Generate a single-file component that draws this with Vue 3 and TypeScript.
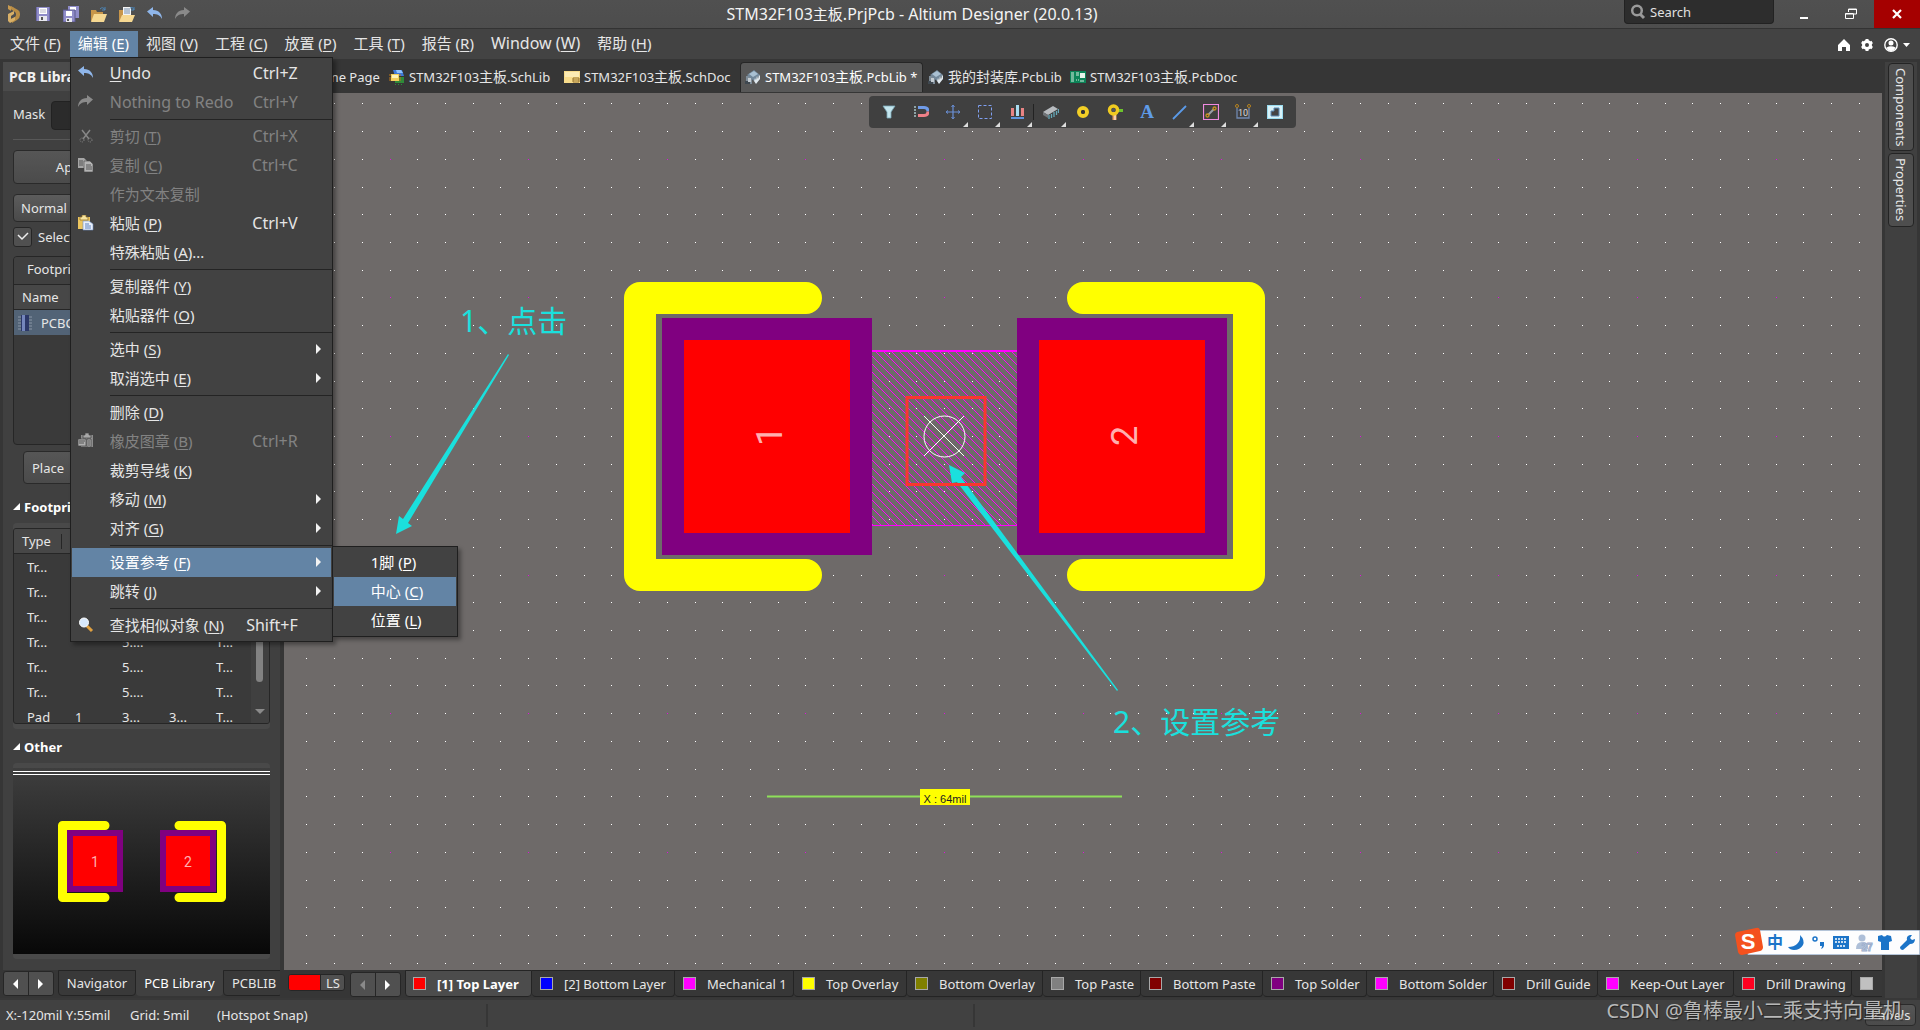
<script setup lang="ts">
interface Run { text: string; cjk: boolean }
interface MenuEntry {
  label?: string
  key?: string
  tail?: string
  shortcut?: string
  icon?: string
  disabled?: boolean
  arrow?: boolean
  active?: boolean
  children?: MenuEntry[]
  separator?: boolean
}

/** Splits a label into Latin and Chinese runs, which are set at slightly different sizes. */
function runs(text: string): Run[] {
  return (text.match(/[\u3000-\u9fff]+|[^\u3000-\u9fff]+/g) ?? []).map(part => ({
    text: part,
    cjk: /[\u3000-\u9fff]/.test(part),
  }))
}

const menus = [
  { label: '文件', key: 'F' },
  { label: '编辑', key: 'E', open: true },
  { label: '视图', key: 'V' },
  { label: '工程', key: 'C' },
  { label: '放置', key: 'P' },
  { label: '工具', key: 'T' },
  { label: '报告', key: 'R' },
  { label: 'Window', key: 'W' },
  { label: '帮助', key: 'H' },
]

const editMenu: MenuEntry[] = [
  { label: 'Undo', shortcut: 'Ctrl+Z', icon: 'undo' },
  { label: 'Nothing to Redo', shortcut: 'Ctrl+Y', icon: 'redo', disabled: true },
  { separator: true },
  { label: '剪切', key: 'T', shortcut: 'Ctrl+X', icon: 'cut', disabled: true },
  { label: '复制', key: 'C', shortcut: 'Ctrl+C', icon: 'copy', disabled: true },
  { label: '作为文本复制', disabled: true },
  { label: '粘贴', key: 'P', shortcut: 'Ctrl+V', icon: 'paste' },
  { label: '特殊粘贴', key: 'A', tail: '...' },
  { separator: true },
  { label: '复制器件', key: 'Y' },
  { label: '粘贴器件', key: 'O' },
  { separator: true },
  { label: '选中', key: 'S', arrow: true },
  { label: '取消选中', key: 'E', arrow: true },
  { separator: true },
  { label: '删除', key: 'D' },
  { label: '橡皮图章', key: 'B', shortcut: 'Ctrl+R', icon: 'stamp', disabled: true },
  { label: '裁剪导线', key: 'K' },
  { label: '移动', key: 'M', arrow: true },
  { label: '对齐', key: 'G', arrow: true },
  { separator: true },
  {
    label: '设置参考', key: 'F', arrow: true, active: true,
    children: [
      { label: '1脚', key: 'P' },
      { label: '中心', key: 'C', active: true },
      { label: '位置', key: 'L' },
    ],
  },
  { label: '跳转', key: 'J', arrow: true },
  { separator: true },
  { label: '查找相似对象', key: 'N', shortcut: 'Shift+F', icon: 'find' },
]

const docTabs = [
  { label: 'Home Page', icon: 'home', width: 100 },
  { label: 'STM32F103主板.SchLib', icon: 'schlib', width: 175 },
  { label: 'STM32F103主板.SchDoc', icon: 'schdoc', width: 181 },
  { label: 'STM32F103主板.PcbLib *', icon: 'pcblib', width: 183, active: true },
  { label: '我的封装库.PcbLib', icon: 'pcblib', width: 142 },
  { label: 'STM32F103主板.PcbDoc', icon: 'pcbdoc', width: 180 },
]

const layers = [
  { label: '[1] Top Layer', color: '#ff0000', width: 127, active: true },
  { label: '[2] Bottom Layer', color: '#0000ff', width: 143 },
  { label: 'Mechanical 1', color: '#ff00ff', width: 119 },
  { label: 'Top Overlay', color: '#ffff00', width: 113 },
  { label: 'Bottom Overlay', color: '#808000', width: 136 },
  { label: 'Top Paste', color: '#808080', width: 98 },
  { label: 'Bottom Paste', color: '#800000', width: 122 },
  { label: 'Top Solder', color: '#800080', width: 104 },
  { label: 'Bottom Solder', color: '#ff00ff', width: 127 },
  { label: 'Drill Guide', color: '#800000', width: 104 },
  { label: 'Keep-Out Layer', color: '#ff00ff', width: 136 },
  { label: 'Drill Drawing', color: '#ff0020', width: 118 },
  { label: '', color: '#c0c0c0', width: 60 },
]

const primitives = [
  ['Tr...', '', '5....', '', 'T...'],
  ['Tr...', '', '5....', '', 'T...'],
  ['Tr...', '', '5....', '', 'T...'],
  ['Tr...', '', '5....', '', 'T...'],
  ['Tr...', '', '5....', '', 'T...'],
  ['Tr...', '', '5....', '', 'T...'],
  ['Pad', '1', '3...', '3...', 'T...'],
]

const tools = [
  { name: 'Filter', icon: 'filter' },
  { name: 'Snap', icon: 'magnet' },
  { name: 'Move', icon: 'cross', more: true },
  { name: 'Select', icon: 'marquee', more: true },
  { name: 'Align', icon: 'align', more: true, last: true },
  { name: 'Component', icon: 'chip', more: true },
  { name: 'Pad', icon: 'pad' },
  { name: 'Via', icon: 'via' },
  { name: 'String', icon: 'string' },
  { name: 'Line', icon: 'line', more: true },
  { name: 'Keepout', icon: 'keepout', more: true },
  { name: 'Dimension', icon: 'dimension', more: true },
  { name: 'Region', icon: 'region' },
]

const icons: Record<string, string> = {
  save: '<path d="M1 1h14v14H1z" fill="#8f8cc8"/><path d="M1 1h1v14H1zM14 1h1v14h-1z" fill="#6d6aa8"/><path d="M4 2h8v6H4z" fill="#fff"/><path d="M5 4h6M5 6h6" stroke="#b8b8c8"/><path d="M4 10h8v5H4z" fill="#e8e8f0"/><path d="M6 11h2v3H6z" fill="#555"/>',
  saveall: '<path d="M5 0h11v12H5z" fill="#8f8cc8"/><path d="M7 1h6v3H7z" fill="#fff"/><path d="M0 4h12v12H0z" fill="#8f8cc8" stroke="#5b588e" stroke-width="1"/><path d="M3 5h6v5H3z" fill="#fff"/><path d="M3 12h6v4H3z" fill="#e8e8f0"/><path d="M4 13h2v2H4z" fill="#555"/>',
  open: '<path d="M0 4h5l1 2h6v9H0z" fill="#c8964a"/><path d="M3 8h13l-3 8H0z" fill="#f6d892"/><path d="M9 3q3-3 5 1M14 1v3h-3" fill="none" stroke="#4d86b8" stroke-width="1"/>',
  openproj: '<path d="M0 4h4v11H0z" fill="#c8964a"/><path d="M4 1h8v10H4z" fill="#f4f4f4"/><path d="M5 3h6M5 5h6M5 7h6" stroke="#7790b0"/><path d="M3 9h13l-3 7H0z" fill="#f6d892"/><path d="M11 2q3-2 4 2M15 1v3h-3" fill="none" stroke="#4d86b8"/>',
  undo: '<path d="M0 5.500L6 1v3c6 0 9 4 9 9-2-4-5-5-9-5v3z" fill="#8fb6ea"/>',
  redo: '<path d="M15 5.500L9 1v3C3 4 0 8 0 13c2-4 5-5 9-5v3z" fill="#8a8a8a"/>',
  cut: '<path d="M4 2l7 9M12 2L5 11" stroke="#868686" stroke-width="1.500"/><circle cx="4" cy="12" r="2" fill="none" stroke="#868686" stroke-dasharray="1 1"/><circle cx="12" cy="12" r="2" fill="none" stroke="#868686" stroke-dasharray="1 1"/>',
  copy: '<path d="M0 1h6l3 3v7H0z" fill="#a6a6a6"/><path d="M6 4h6l3 3v8H6z" fill="#b4b4b4" stroke="#444" stroke-width=".6"/><path d="M1 4h4M1 6h4M1 8h4M8 8h5M8 10h6M8 12h6" stroke="#555"/>',
  paste: '<path d="M0 2h12v12H0z" fill="#ecc55e"/><path d="M4 0h4v2h2v3H2V2h2z" fill="#f6e4a0" stroke="#8c6a20" stroke-width=".7"/><path d="M5 6h6l4 3v6H5z" fill="#e8effa" stroke="#6f8fc0" stroke-width=".6"/><path d="M7 9h4M7 11h6M7 13h6" stroke="#5c82c0"/>',
  stamp: '<path d="M3 2h12v12H3z" fill="#8d8d8d"/><path d="M7 0h4v2h2v3H5V2h2z" fill="#a8a8a8" stroke="#444" stroke-width=".7"/><path d="M0 6h8v7H0zM9 6h4v8H9z" fill="#b0b0b0" stroke="#444" stroke-width=".7"/><path d="M1 8h6M1 10h5M10 8h2M10 10h2M10 12h2" stroke="#555"/>',
  find: '<path d="M9 9l5 5" stroke="#e0a040" stroke-width="3"/><circle cx="6" cy="5.500" r="4.500" fill="#d8e8fa" stroke="#fff" stroke-width="1"/>',
  home: '<path d="M8 2l7 7h-2v5H3V9H1z" fill="#ddd"/>',
  schlib: '<path d="M4 1h9l2 6H6z" fill="#3e79d8"/><path d="M7 1h5l2 3H8z" fill="#8ec2ff"/><path d="M6 8h9v6H6z" fill="#2f8a3a"/><path d="M6 15h1v1H6zM9 15h1v1H9zM12 15h1v1h-1z" fill="#2f8a3a"/><path d="M2 5h8v7H2z" fill="#f2cf5c"/><path d="M3 6h6v3H3z" fill="#fdf3b8"/><path d="M0 6h2M0 9h2M0 11h2M10 6h2M10 9h2M10 11h2" stroke="#c07818"/>',
  schdoc: '<path d="M0 2h16v12H0z" fill="#f8dc8c"/><path d="M1 3h14v5H1z" fill="#fcebb4"/><path d="M9 9h6v4H9zM9 11h6" fill="none" stroke="#96722c"/>',
  pcblib: '<path d="M1 7h6v8H1z" fill="#7e8c98"/><path d="M0 12h5v3H0z" fill="#3f4850"/><path d="M2 6L9 1l6 5-6 6z" fill="#71879a"/><path d="M4 5l5-3 4 3-5 3z" fill="#a9c0d2"/><path d="M9 12l1-3 1 2 1-4 1 3 1-4 1 1v3l-4 5z" fill="#dfe8ee"/><path d="M3 9h3v4H3z" fill="#c4ccd2"/>',
  pcbdoc: '<path d="M0 2h16v12H0z" fill="#0c8458"/><path d="M1 4h3M1 6h3M1 8h3M1 10h3M1 12h3M6 4h3M6 6h3M6 11h1M8 11h1M10 12h4" stroke="#d8efe0"/><path d="M10 4h5v5h-5z" fill="#e6f4ea"/>',
  filter: '<path d="M2 2h12l-4 6v6H6V8z" fill="#c4e6ee" stroke="#7ba8b8" stroke-width=".8"/>',
  magnet: '<path d="M5 3.500h6q4 0 4 4" fill="none" stroke="#6f9be8" stroke-width="3"/><path d="M15 7.500q0 4-4 4H5" fill="none" stroke="#ee8088" stroke-width="3"/><path d="M1 3h2M1 6h2M1 9h2M1 12h2" stroke="#a8c4c8" stroke-width="1.500"/>',
  cross: '<path d="M8 2v12M2 8h12" stroke="#6a90d8" stroke-width="1.200"/><path d="M6.500 3L8 1l1.500 2M6.500 13L8 15l1.500-2M3 6.500L1 8l2 1.500M13 6.500L15 8l-2 1.500" fill="none" stroke="#6a90d8"/>',
  marquee: '<path d="M1.500 1.500h13v13h-13z" fill="none" stroke="#7f9ff0" stroke-dasharray="3 2"/>',
  align: '<path d="M2 4h3v8H2zM12 4h3v8h-3z" fill="#e88484"/><path d="M7 1h3v11H7z" fill="#a8dcf0"/><path d="M2 13h13v2H2z" fill="#5f94dc"/>',
  chip: '<path d="M0 8L10 2l5 3-10 6z" fill="#b8bcc0"/><path d="M0 8l5 3v3l-5-3z" fill="#707478"/><path d="M6 11v4M8.500 10v4M11 8v5M13.500 7v4M15.500 5v4" stroke="#66a8b8" stroke-width="1.300"/>',
  pad: '<circle cx="8" cy="8" r="4" fill="none" stroke="#f3cf26" stroke-width="4"/><circle cx="8" cy="8" r="2" fill="#333"/>',
  via: '<path d="M5.500 8h4v8h-4z" fill="#e8a060"/><path d="M7.500 8h1v8h-1z" fill="#fff"/><path d="M9 5h7v3H9z" fill="#6cc42c"/><circle cx="6.500" cy="6" r="4" fill="none" stroke="#f0cb20" stroke-width="3.500"/><circle cx="6.500" cy="6" r="2" fill="#555"/>',
  string: '<text x="8" y="14" font-family="Liberation Serif, serif" font-size="19" font-weight="700" text-anchor="middle" fill="#5f9ce8">A</text>',
  line: '<path d="M2 15L15 2" stroke="#5a9ae8" stroke-width="1.800"/>',
  keepout: '<path d="M.5 .5h15v15H.5z" fill="none" stroke="#f08ae0" stroke-width="1.200"/><path d="M5 11l6-6" stroke="#9a9ea8" stroke-width="2"/><circle cx="4.500" cy="11.500" r="1.500" fill="none" stroke="#c89020" stroke-width="1.300"/><circle cx="11.500" cy="4.500" r="1.500" fill="none" stroke="#c89020" stroke-width="1.300"/>',
  dimension: '<path d="M2 4v10h12V4" fill="none" stroke="#7088b0" stroke-width="1.300"/><circle cx="2" cy="2" r="1.500" fill="none" stroke="#b88420"/><circle cx="14" cy="2" r="1.500" fill="none" stroke="#b88420"/><text x="8" y="12" font-family="Roboto, sans-serif" font-size="9" text-anchor="middle" fill="#ddd">10</text>',
  region: '<path d="M0 1h16v14H0z" fill="#9adcf0"/><path d="M1 2h14v12H1z" fill="#d8f2f8"/><path d="M7 4h5v8H4V7h3z" fill="#444" stroke="#5c8cb8"/>',
}

/* Snap grid: 5 mil pitch around the footprint origin, every fifth point in both axes is magenta. */
const pitch = 27.72
const white: string[] = []
const magenta: string[] = []
for (let i = -24; i <= 40; i++) {
  for (let j = -12; j <= 30; j++) {
    const point = `M${Math.round(i * pitch)} ${Math.round(j * pitch)}h1`
    if (i % 5 === 0 && j % 5 === 0 && (i || j)) magenta.push(point)
    else white.push(point)
  }
}
const gridDots = white.join('')
const majorDots = magenta.join('')
</script>

<template>
  <div class="app">
    <header class="titlebar">
      <div class="quick">
        <svg class="logo" viewBox="0 0 14 20" width="14" height="20">
          <path d="M1 1l6 3v3L4 5v2L1 5z" fill="#c79a50" />
          <path d="M4 2l7 4q2 1 2 4v1q0 3-3 5l-5 3-1-4 4-2q1-1 1-2v-1q0-1-1-2L4 5z" fill="#b98d45" />
          <path d="M1 10l6-3v3l-3 2v3l4-2v3l-5 3-2-2z" fill="#d8b068" />
        </svg>
        <button v-for="n in ['save', 'saveall', 'open', 'openproj', 'undo', 'redo']" :key="n" class="quick-btn" :aria-label="n">
          <svg viewBox="0 0 16 16" width="16" height="16" v-html="icons[n]" />
        </button>
      </div>
      <h1 class="title"><span v-for="(r, i) in runs('STM32F103主板.PrjPcb - Altium Designer (20.0.13)')" :key="i" :class="{ cjk: r.cjk }">{{ r.text }}</span></h1>
      <div class="window-tools">
        <label class="search">
          <svg viewBox="0 0 16 16" width="16" height="16"><circle cx="7" cy="6.500" r="4.800" fill="none" stroke="#9a9a9a" stroke-width="2.500" /><path d="M10 10l4 4" stroke="#9a9a9a" stroke-width="3" /></svg>
          <input type="text" placeholder="Search" aria-label="Search">
        </label>
        <button class="win" aria-label="Minimize"><svg viewBox="0 0 12 12" width="12" height="12"><path d="M2 9h8v2H2z" fill="#fff" /></svg></button>
        <button class="win" aria-label="Restore"><svg viewBox="0 0 12 12" width="12" height="12"><path d="M3.500 4V1h8v5H9M3.500 1.500h8" fill="none" stroke="#fff" /><path d="M.5 5.500h8v5h-8zM.5 6h8" fill="none" stroke="#fff" /></svg></button>
        <button class="win close" aria-label="Close"><svg viewBox="0 0 12 12" width="12" height="12"><path d="M2 2l8 8M10 2l-8 8" stroke="#fff" stroke-width="2.200" /></svg></button>
      </div>
    </header>

    <nav class="menubar">
      <div v-for="m in menus" :key="m.key" class="menu">
        <button class="menu-btn" :class="{ open: m.open, latin: m.label === 'Window' }">{{ m.label }} <span>(<u>{{ m.key }}</u>)</span></button>
        <ul v-if="m.open" class="dropdown">
          <template v-for="(e, i) in editMenu" :key="i">
            <li v-if="e.separator" class="rule" />
            <li v-else class="entry" :class="{ active: e.active, disabled: e.disabled }">
              <button class="entry-btn" :disabled="e.disabled">
                <span class="entry-icon"><svg v-if="e.icon" viewBox="0 0 16 16" width="16" height="16" v-html="icons[e.icon]" /></span>
                <span v-if="e.label === 'Undo'" class="latin"><u>U</u>ndo</span>
                <span v-else :class="{ latin: e.label === 'Nothing to Redo' }">{{ e.label }}<template v-if="e.key"> (<u>{{ e.key }}</u>)</template>{{ e.tail }}</span>
                <span v-if="e.shortcut" class="shortcut">{{ e.shortcut }}</span>
                <span v-if="e.arrow" class="more" />
              </button>
              <ul v-if="e.children" class="dropdown sub">
                <li v-for="c in e.children" :key="c.key" class="entry" :class="{ active: c.active }">
                  <button class="entry-btn sub-btn">{{ c.label }} (<u>{{ c.key }}</u>)</button>
                </li>
              </ul>
            </li>
          </template>
        </ul>
      </div>
      <div class="account">
        <button aria-label="Home"><svg viewBox="0 0 14 14" width="14" height="14"><path d="M7 1l6 6v6H9V9H5v4H1V7z" fill="#fff" /></svg></button>
        <button aria-label="Settings"><svg viewBox="0 0 14 14" width="14" height="14"><circle cx="7" cy="7" r="3.500" fill="none" stroke="#fff" stroke-width="3" /><path d="M7 1v2.500M7 10.500V13M1.800 4l2 1.200M10.200 8.800l2 1.200M1.800 10l2-1.200M10.200 5.200l2-1.200" stroke="#fff" stroke-width="3" /></svg></button>
        <button class="user" aria-label="Account"><svg viewBox="0 0 26 14" width="26" height="14"><circle cx="7" cy="7" r="6.200" fill="#434343" stroke="#fff" stroke-width="1.400" /><circle cx="7" cy="5" r="2.500" fill="#fff" /><path d="M2.500 9.500q4.500-2.500 9 0Q10 13 7 13T2.500 9.500z" fill="#fff" /><path d="M19 5h7l-3.500 4z" fill="#fff" /></svg></button>
      </div>
    </nav>

    <main class="workspace">
      <aside class="left">
        <section class="panel">
          <h2 class="panel-title">PCB Library</h2>
          <div class="panel-body">
            <label class="mask">Mask <input type="text"></label>
            <hr class="divider">
            <div class="buttons"><button class="btn apply">Apply</button></div>
            <select class="mode" aria-label="Highlight mode"><option>Normal</option></select>
            <label class="check"><input type="checkbox" checked><svg viewBox="0 0 12 12" width="12" height="12"><path d="M1 5l4 4 6-6" fill="none" stroke="#eee" stroke-width="1.500" /></svg>Select</label>
            <div class="list">
              <h3 class="list-title">Footprints</h3>
              <table class="grid">
                <thead><tr><th class="first">Name</th></tr></thead>
                <tbody>
                  <tr class="selected">
                    <td>
                      <span class="component">
                        <svg viewBox="0 0 14 16" width="14" height="16"><path d="M3 0h8v16H3z" fill="#2c3868" /><path d="M4 0h3v16H4z" fill="#7486bc" /><path d="M0 2h3M0 5h3M0 8h3M0 11h3M0 14h3M11 2h3M11 5h3M11 8h3M11 11h3M11 14h3" stroke="#8a97a6" /></svg>PCBCOMPONENT
                      </span>
                    </td>
                  </tr>
                </tbody>
              </table>
            </div>
            <div class="buttons place-row"><button class="btn place">Place</button></div>
            <h3 class="section">Footprint</h3>
            <div class="tray primitives">
              <div class="scroller">
                <table class="grid rows">
                  <thead><tr><th class="type">Type</th><th /><th /><th /><th /></tr></thead>
                  <tbody>
                    <tr v-for="(row, i) in primitives" :key="i"><td v-for="(cell, j) in row" :key="j">{{ cell }}</td></tr>
                  </tbody>
                </table>
                <div class="scrollbar"><span class="thumb" /><span class="down" /></div>
              </div>
            </div>
            <h3 class="section other">Other</h3>
            <div class="tray preview">
              <svg class="thumbnail" viewBox="0 0 257 186" preserveAspectRatio="xMidYMid meet">
                <g fill="none" stroke="#ffff00" stroke-width="9" stroke-linecap="round" stroke-linejoin="round">
                  <path d="M92 57.500H49.500V129.500H92" /><path d="M166 57.500H208.500V129.500H166" />
                </g>
                <path d="M54 62h56v62H54zM147 62h56v62h-56z" fill="#800080" />
                <path d="M60 68h44v50H60zM153 68h44v50h-44z" fill="#ff0000" />
                <text x="82" y="99" class="pin small">1</text><text x="175" y="99" class="pin small">2</text>
              </svg>
            </div>
          </div>
        </section>
        <div class="panel-tabs">
          <div class="pager"><button aria-label="Previous"><i class="prev" /></button><button aria-label="Next"><i class="next" /></button></div>
          <button class="ptab nav">Navigator</button>
          <button class="ptab lib on">PCB Library</button>
          <button class="ptab last-tab">PCBLIB</button>
        </div>
      </aside>

      <section class="center">
        <div class="doc-tabs">
          <button v-for="t in docTabs" :key="t.label" class="doc" :class="{ on: t.active }" :style="{ width: t.width + 'px' }">
            <svg viewBox="0 0 16 16" width="16" height="16" v-html="icons[t.icon]" />
            <span><span v-for="(r, i) in runs(t.label)" :key="i" :class="{ cjk: r.cjk }">{{ r.text }}</span></span>
          </button>
        </div>

        <div class="canvas">
          <svg class="drawing" width="100%" height="100%">
            <defs>
              <pattern id="hatch" width="8" height="8" patternUnits="userSpaceOnUse">
                <path d="M-1 -1l10 10M7 -1l2 2M-1 7l2 2" stroke="#ff00ff" stroke-width="1" />
              </pattern>
            </defs>
            <g transform="translate(660 343)">
              <path d="M-72 -86H73V90H-72z" fill="url(#hatch)" />
              <path d="M-72 -85H73" stroke="#ff00ff" stroke-width="2" /><path d="M-72 89.500H73" stroke="#ff00ff" />
              <g transform="translate(0 .5)" shape-rendering="crispEdges">
                <path :d="gridDots" stroke="#fff" /><path :d="majorDots" stroke="#e010e0" />
              </g>
              <g fill="none" stroke="#ffff00" stroke-width="32" stroke-linecap="round" stroke-linejoin="round">
                <path d="M-138 -138H-304V139H-138" /><path d="M139 -138H305V139H139" />
              </g>
              <path d="M-282 -118h210v237h-210zM73 -118h210v237H73z" fill="#800080" />
              <path d="M-260 -96h166v193h-166zM95 -96h166v193H95z" fill="#ff0000" />
              <text class="pin" transform="translate(-162 0) rotate(-90)">1</text>
              <text class="pin" transform="translate(193 0) rotate(-90)">2</text>
              <g fill="none" stroke="#fff"><circle cx=".5" cy=".5" r="20.500" /><path d="M-20 -20L20 20M20 -20L-20 20" /></g>
              <path d="M-177 360.500H178" stroke="#8ee05a" stroke-width="2" />
              <path d="M-24 353h50v16h-50z" fill="#ffff00" />
              <text class="measure" x="1" y="367">X : 64mil</text>
              <g fill="#1ae0dd">
                <path d="M-548 98L-545 80L-541 83L-436 -82L-435 -81L-536 87L-532 90z" />
                <path d="M5 29L21 37L17 41L174 254L173 255L13 46L8 47z" />
                <text class="note" x="-484" y="-104">1、点击</text>
                <text class="note" x="169" y="297">2、设置参考</text>
              </g>
              <path d="M-37 -38.500H41V48.500H-37z" fill="none" stroke="#f8372f" stroke-width="3" />
            </g>
          </svg>
          <div class="toolbar">
            <button v-for="t in tools" :key="t.name" class="tool" :class="{ more: t.more, last: t.last }" :aria-label="t.name">
              <svg viewBox="0 0 16 16" width="16" height="16" v-html="icons[t.icon]" />
            </button>
          </div>
        </div>

        <div class="layers">
          <button class="layer-set"><span class="chip" /><span class="ls">LS</span></button>
          <div class="pager"><button aria-label="Previous layer" disabled><i class="prev" /></button><button aria-label="Next layer"><i class="next" /></button></div>
          <div class="layer-tabs">
            <button v-for="l in layers" :key="l.label" class="layer" :class="{ on: l.active }" :style="{ width: l.width + 'px' }">
              <i class="swatch" :style="{ background: l.color }" />{{ l.label }}
            </button>
          </div>
        </div>
      </section>

      <aside class="right">
        <button class="side">Components</button>
        <button class="side">Properties</button>
      </aside>
    </main>

    <footer class="status">
      <span class="coords">X:-120mil Y:55mil</span>
      <span class="snapgrid">Grid: 5mil</span>
      <span class="hotspot">(Hotspot Snap)</span>
      <span class="cell" />
      <button class="btn panels">Panels</button>
      <p class="watermark">CSDN @鲁棒最小二乘支持向量机</p>
    </footer>

    <div class="ime">
      <svg viewBox="0 0 186 28" width="186" height="28">
        <path d="M14 3.500h171.500v24H14z" fill="#fdfdfe" stroke="#b4c4d8" />
        <path d="M3 5L22 1q3-1 4 2l3 17q0 3-3 4L8 28q-3 0-4-3L1 8q0-2 2-3z" fill="#f4511e" />
        <text x="14" y="22" font-family="Liberation Sans, sans-serif" font-size="22" font-weight="700" fill="#fff" text-anchor="middle">S</text>
        <text x="41" y="21" font-family="Noto Sans CJK SC, sans-serif" font-size="16" font-weight="700" fill="#1c74c8" text-anchor="middle">中</text>
        <g fill="#1c74c8">
          <path d="M66 8q5 5 3 10-3 5-9 5-4 0-6-3 6 0 9-3 4-4 3-9z" />
          <circle cx="81" cy="12" r="2" fill="none" stroke="#1c74c8" stroke-width="1.500" />
          <path d="M86 15h4v4q-1 3-3 3 1-2 1-3h-2z" />
          <path d="M99 9h16v13H99z" />
          <path d="M101 12h12M101 15h12M103 19h8" stroke="#fff" stroke-width="1.500" stroke-dasharray="2 1" />
          <path d="M144 9l4-1q2 3 5 0l4 1 1 5-3 1v8h-8v-8l-3-1z" />
          <path d="M166 20l7-7q-1-4 3-5h2l-2 3 2 2 3-1q0 5-5 5l-7 6q-3 0-3-3z" />
        </g>
        <g fill="#aebfd8"><circle cx="128" cy="11" r="3.500" /><path d="M122 22q0-7 6-7t6 4v3z" /></g>
        <text x="133" y="24" font-family="Liberation Sans, sans-serif" font-size="10" font-weight="700" fill="#fff" stroke="#9aaccb" stroke-width="1" text-anchor="middle">27</text>
      </svg>
    </div>
  </div>
</template>

<style>
body { margin: 0; background: #363636; }
</style>

<style scoped>
.app {
  position: relative;
  display: flex;
  flex-direction: column;
  height: 100vh;
  overflow: hidden;
  background: #363636;
  color: #e6e6e6;
  font: 13px/20px "Noto Sans", "Noto Sans CJK SC", sans-serif;
}
button, input, select {
  margin: 0;
  padding: 0;
  border: 0;
  background: none;
  color: inherit;
  font: inherit;
  box-sizing: border-box;
}
svg { display: block; flex: none; }
ul { margin: 0; padding: 0; list-style: none; }
h1, h2, h3, p { margin: 0; }

/* title bar */
.titlebar {
  display: grid;
  grid-template-columns: 1fr auto 1fr;
  height: 28px;
  flex: none;
  background: linear-gradient(#505050, #4d4d4d);
  border-bottom: 1px solid #333;
}
.quick { display: flex; align-items: center; padding-left: 7px; }
.logo { margin-right: 8px; }
.quick-btn { width: 28px; height: 28px; display: flex; align-items: center; justify-content: center; }
.title { font-size: 16px; line-height: 28px; font-weight: 400; color: #f4f4f4; white-space: nowrap; padding-right: 96px; }
.title .cjk { font-size: 15px; }
.window-tools { display: flex; justify-content: flex-end; }
.search {
  display: flex;
  align-items: center;
  gap: 4px;
  width: 150px;
  height: 24px;
  margin-right: 6px;
  padding-left: 5px;
  box-sizing: border-box;
  background: #2d2d2d;
  border: 1px solid #222;
  border-top: 0;
  border-radius: 0 0 4px 4px;
}
.search input { width: 110px; outline: 0; }
.search input::placeholder { color: #e0e0e0; opacity: 1; }
.win { width: 47px; height: 28px; display: flex; align-items: center; justify-content: center; }
.close { width: 46px; background: #a50000; }

/* menu bar */
.menubar { display: flex; height: 30px; flex: none; background: #434343; padding: 2px 0 0 2px; box-sizing: border-box; }
.menu { position: relative; }
.menu-btn { height: 26px; padding: 0 9px 2px 8px; font-size: 15px; line-height: 24px; white-space: nowrap; }
.menu-btn.latin, .latin { font-size: 16px; }
.menu-btn.open { background: #6384a5; color: #fff; }
u { text-underline-offset: 2px; }
.dropdown {
  position: absolute;
  z-index: 10;
  left: 0;
  top: 26px;
  width: 263px;
  box-sizing: border-box;
  padding: 1px;
  background: #424242;
  border: 1px solid #1f1f1f;
  box-shadow: 3px 3px 4px rgba(0, 0, 0, .35);
  font-size: 15px;
}
.rule { height: 1px; margin: 2px -1px 2px 38px; background: #242424; }
.entry { position: relative; }
.entry.active { background: #6384a5; color: #fff; }
.entry.disabled { color: #828282; }
.entry-btn { display: flex; align-items: center; width: 100%; height: 29px; padding-bottom: 2px; text-align: left; white-space: nowrap; }
.entry-icon { width: 32px; padding-left: 6px; }
.shortcut { margin-left: auto; margin-right: 33px; font-size: 16px; }
.entry-btn > .more { margin-left: auto; margin-right: 10px; border: 5px solid transparent; border-left-color: #f2f2f2; border-right: 0; }
.sub { left: 260px; top: -2px; width: 126px; }
.sub-btn { padding-left: 37px; white-space: pre; }
.account { display: flex; align-items: center; gap: 9px; margin-left: auto; padding-right: 10px; }
.account .user { margin-left: 1px; }

/* work area */
.workspace { display: flex; flex: 1; min-height: 0; }
.left { display: flex; flex-direction: column; width: 280px; flex: none; padding: 3px 0 0 3px; box-sizing: border-box; }
.panel { display: flex; flex-direction: column; flex: 1; min-height: 0; background: #404040; }
.panel-title { padding-left: 6px; height: 29px; flex: none; font-size: 14px; line-height: 29px; color: #f2f2f2; background: #4b4b4b; }
.panel-body { display: flex; flex-direction: column; flex: 1; min-height: 0; padding: 10px 10px 11px; }
.mask { display: flex; align-items: center; gap: 6px; height: 29px; line-height: 26px; align-items: flex-start; }
.mask input { flex: 1; height: 29px; background: #2b2b2b; border: 1px solid #222; border-radius: 4px; }
.divider { width: 100%; height: 1px; margin: 9px 0 10px; border: 0; background: #585858; }
.buttons { display: flex; }
.btn { background: linear-gradient(#565656, #4b4b4b); border: 1px solid #2a2a2a; border-radius: 4px; }
.apply { width: 120px; height: 34px; }
.mode { flex: none; height: 28px; margin-top: 10px; padding-left: 7px; appearance: none; background: linear-gradient(#5c5c5c, #4a4a4a); border: 1px solid #2a2a2a; border-radius: 4px; }
.check { position: relative; display: flex; align-items: center; gap: 6px; height: 20px; margin-top: 5px; }
.check input { appearance: none; width: 19px; height: 20px; background: #505050; border: 1px solid #262626; border-radius: 3px; }
.check svg { position: absolute; left: 4px; top: 3px; }
.list { height: 189px; flex: none; margin-top: 9px; border: 1px solid #262626; border-radius: 4px; background: #3a3a3a; box-sizing: border-box; overflow: hidden; }
.list-title { height: 28px; padding-left: 13px; font-size: 13px; font-weight: 400; line-height: 24px; background: #404040; box-sizing: border-box; border-bottom: 1px solid #262626; }
.grid { width: 100%; border-collapse: collapse; table-layout: fixed; }
.grid th { height: 24px; padding: 0; font-weight: 400; text-align: left; background: #474747; border-bottom: 1px solid #262626; }
.grid th.first { padding-left: 8px; }
.grid td { height: 25px; padding: 0; white-space: nowrap; }
.selected { background: #526376; }
.component { display: flex; align-items: center; gap: 9px; padding-left: 4px; }
.place-row { margin-top: 6px; padding-left: 10px; }
.place { width: 60px; height: 33px; text-align: left; padding-left: 8px; }
.section { position: relative; height: 20px; flex: none; margin-top: 13px; padding-left: 11px; font-size: 13px; line-height: 20px; color: #fff; }
.section::before { content: ""; position: absolute; left: 0; top: 6px; border-left: 7px solid transparent; border-bottom: 7px solid #fff; }
.other { margin-top: 8px; }
.tray { margin-top: 6px; padding: 5px 0; background: #494949; border-radius: 4px; }
.primitives { height: 196px; flex: none; }
.scroller { display: flex; height: 100%; box-sizing: border-box; background: #3a3a3a; border: 1px solid #262626; border-radius: 3px; overflow: hidden; }
.rows { width: 237px; flex: none; align-self: flex-start; }
.rows td:first-child { padding-left: 13px; }
.rows .type { width: 61px; padding-left: 8px; background: linear-gradient(#262626, #262626) 47px 5px / 1px 15px no-repeat #474747; box-sizing: border-box; }
.rows th:nth-child(2), .rows th:nth-child(3) { width: 47px; }
.rows th:nth-child(4) { width: 47px; }
.scrollbar { position: relative; flex: 1; background: #404040; }
.thumb { position: absolute; left: 5px; top: 26px; width: 7px; height: 127px; border-radius: 4px; background: #828282; }
.down { position: absolute; left: 4px; bottom: 9px; border: 5px solid transparent; border-top-color: #8a8a8a; border-bottom: 0; }
.preview { flex: 1; min-height: 0; display: flex; }
.thumbnail { width: 100%; height: 100%; background: linear-gradient(#fff, #fff) 0 3px / 100% 1px no-repeat, linear-gradient(#fff, #fff) 0 6px / 100% 1px no-repeat, linear-gradient(#3e3e3e, #080808); }
.pin { font-family: Roboto, "Liberation Sans", sans-serif; font-size: 36px; text-anchor: middle; fill: #ffb0b0; }
.pin.small { font-size: 14px; }

/* bottom tabs */
.panel-tabs { display: flex; height: 28px; flex: none; overflow: hidden; }
.pager { display: flex; flex: none; width: 51px; height: 25px; margin-top: 1px; box-sizing: border-box; background: #505050; border: 1px solid #262626; border-radius: 3px; }
.pager button { flex: 1; display: flex; align-items: center; justify-content: center; padding-right: 2px; }
.pager button + button { border-left: 1px solid #262626; }
.pager i { border: 5px solid transparent; }
.pager .prev { border-right-color: #fff; border-left: 0; }
.pager .next { border-left-color: #fff; border-right: 0; }
.pager button:disabled .prev { border-right-color: #8a8a8a; }
.ptab { height: 26px; flex: none; background: #393939; border: 1px solid #242424; border-radius: 0 0 4px 4px; }
.nav { width: 78px; margin-left: 4px; }
.lib { width: 87px; }
.ptab.on { background: #404040; border-color: transparent; color: #fff; }
.last-tab { width: 60px; padding-left: 8px; text-align: left; }

/* documents */
.center { display: flex; flex-direction: column; flex: 1; min-width: 0; margin-left: 4px; }
.doc-tabs { display: flex; height: 34px; flex: none; align-items: flex-end; }
.doc { display: flex; align-items: center; gap: 4px; flex: none; height: 30px; margin-bottom: 1px; padding: 0 0 0 5px; white-space: nowrap; text-align: left; }
.doc.on { padding-left: 4px; padding-bottom: 2px; background: #585858; border: 1px solid #262626; border-bottom: 0; border-radius: 4px 4px 0 0; color: #fff; }
.doc .cjk { font-size: 14px; }
.canvas { position: relative; flex: 1; min-height: 0; overflow: hidden; background: #6e6a69; }
.drawing { position: absolute; left: 0; top: 0; }
.note { font-family: "Noto Sans", "Noto Sans CJK SC", sans-serif; font-size: 30px; }
.measure { font-family: "Liberation Sans", sans-serif; font-size: 11px; text-anchor: middle; fill: #222; }
.toolbar { position: absolute; left: 585px; top: 3px; display: flex; height: 32px; padding: 0 5px 0 4px; background: #404040; border-radius: 4px; }
.tool { position: relative; display: flex; align-items: center; justify-content: center; width: 32px; height: 32px; }
.tool.more::after { content: ""; position: absolute; right: 1px; bottom: 1px; border-left: 5px solid transparent; border-bottom: 5px solid #ddd; }
.tool.last { margin-right: 2px; }
.tool.last::before { content: ""; position: absolute; right: -1px; top: 8px; width: 1px; height: 16px; background: #222; }

/* layers */
.layers { display: flex; height: 28px; flex: none; padding-left: 4px; }
.layer-set { display: flex; width: 57px; height: 17px; margin-top: 4px; border: 1px solid #262626; border-radius: 3px; background: #505050; overflow: hidden; }
.layer-set .chip { width: 31px; height: 15px; background: #f00; border-right: 1px solid #262626; }
.layer-set .ls { padding-left: 5px; line-height: 17px; }
.layers .pager { margin: 2px 4px 0 5px; }
.layer-tabs { display: flex; flex: 1; min-width: 0; overflow: hidden; }
.layer { display: flex; align-items: center; flex: none; gap: 11px; height: 27px; padding-left: 8px; white-space: nowrap; background: #373737; border: 1px solid #242424; border-left-width: 0; border-radius: 0 0 4px 4px; }
.layer.on { background: #4c4c4c; font-weight: 700; color: #fff; border-left-width: 1px; padding-left: 7px; }
.swatch { width: 13px; height: 13px; box-sizing: border-box; border: 1px solid #a8a8a8; }

/* right rail */
.right { display: flex; flex-direction: column; align-items: center; gap: 2px; width: 32px; flex: none; margin: 3px 3px 0; padding-top: 1px; box-sizing: border-box; background: #404040; }
.side { writing-mode: vertical-rl; width: 26px; padding: 4px 0; line-height: 24px; background: #4e4e4e; border: 1px solid #242424; border-radius: 4px; }

/* status bar */
.status { position: relative; display: flex; align-items: center; height: 32px; flex: none; box-sizing: border-box; padding: 0 4px 0 6px; border-top: 2px solid #383838; background: #414141; }
.coords { width: 124px; }
.snapgrid { width: 87px; }
.hotspot { width: 269px; }
.cell { width: 489px; height: 23px; border: 1px solid #363636; border-width: 0 2px; box-sizing: border-box; }
.panels { width: 51px; height: 22px; margin-left: auto; line-height: 18px; }
.watermark { position: absolute; right: 17px; top: 0; font-size: 20px; line-height: 22px; color: rgba(220, 220, 220, .8); text-shadow: 1px 1px 1px #222; white-space: nowrap; }

.ime { position: absolute; right: 0; bottom: 75px; z-index: 5; }
</style>
